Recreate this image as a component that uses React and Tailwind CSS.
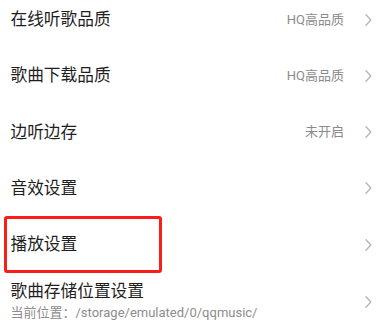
const items = [
  { title: "在线听歌品质", value: "HQ高品质" },
  { title: "歌曲下载品质", value: "HQ高品质" },
  { title: "边听边存", value: "未开启" },
  { title: "音效设置" },
  { title: "播放设置", marked: true },
];

const Chevron = () => (
  <svg width="7" height="12" viewBox="0 0 7 12" className="shrink-0">
    <polyline
      points="1,0.8 5.8,6 1,11.2"
      fill="none"
      stroke="#b3b3b3"
      strokeWidth="1.3"
      strokeLinecap="round"
      strokeLinejoin="round"
    />
  </svg>
);

const Row = ({ title, value, marked }) => (
  <div className="relative flex items-center h-[56.25px] pl-[10.5px] pr-[11px]">
    <span className="flex-1 text-[16.7px] text-[#1f1f1f]">{title}</span>
    {value && <span className="text-[13px] text-[#8a8a8a] mr-[21px]">{value}</span>}
    <Chevron />
    {/* annotation box drawn over the row */}
    {marked && (
      <div className="absolute left-[4px] top-0 w-[158px] h-full border-[3px] border-[#fa1e18] rounded-[3px]" />
    )}
  </div>
);

export default function App() {
  return (
    <div
      className="w-[383px] h-[324px] overflow-hidden bg-white"
      style={{ fontFamily: "Roboto, 'Noto Sans CJK SC', sans-serif" }}
    >
      <div className="-mt-[8.6px]">
        {items.map((it) => (
          <Row key={it.title} {...it} />
        ))}
        <div className="flex items-center pl-[10.5px] pr-[11px] pt-[8px]">
          <div className="flex-1 flex flex-col">
            <span className="text-[16.7px] leading-[22px] text-[#1f1f1f]">歌曲存储位置设置</span>
            <span className="text-[13px] leading-[20px] text-[#8d8d8d]">当前位置：/storage/emulated/0/qqmusic/</span>
          </div>
          <Chevron />
        </div>
      </div>
    </div>
  );
}
